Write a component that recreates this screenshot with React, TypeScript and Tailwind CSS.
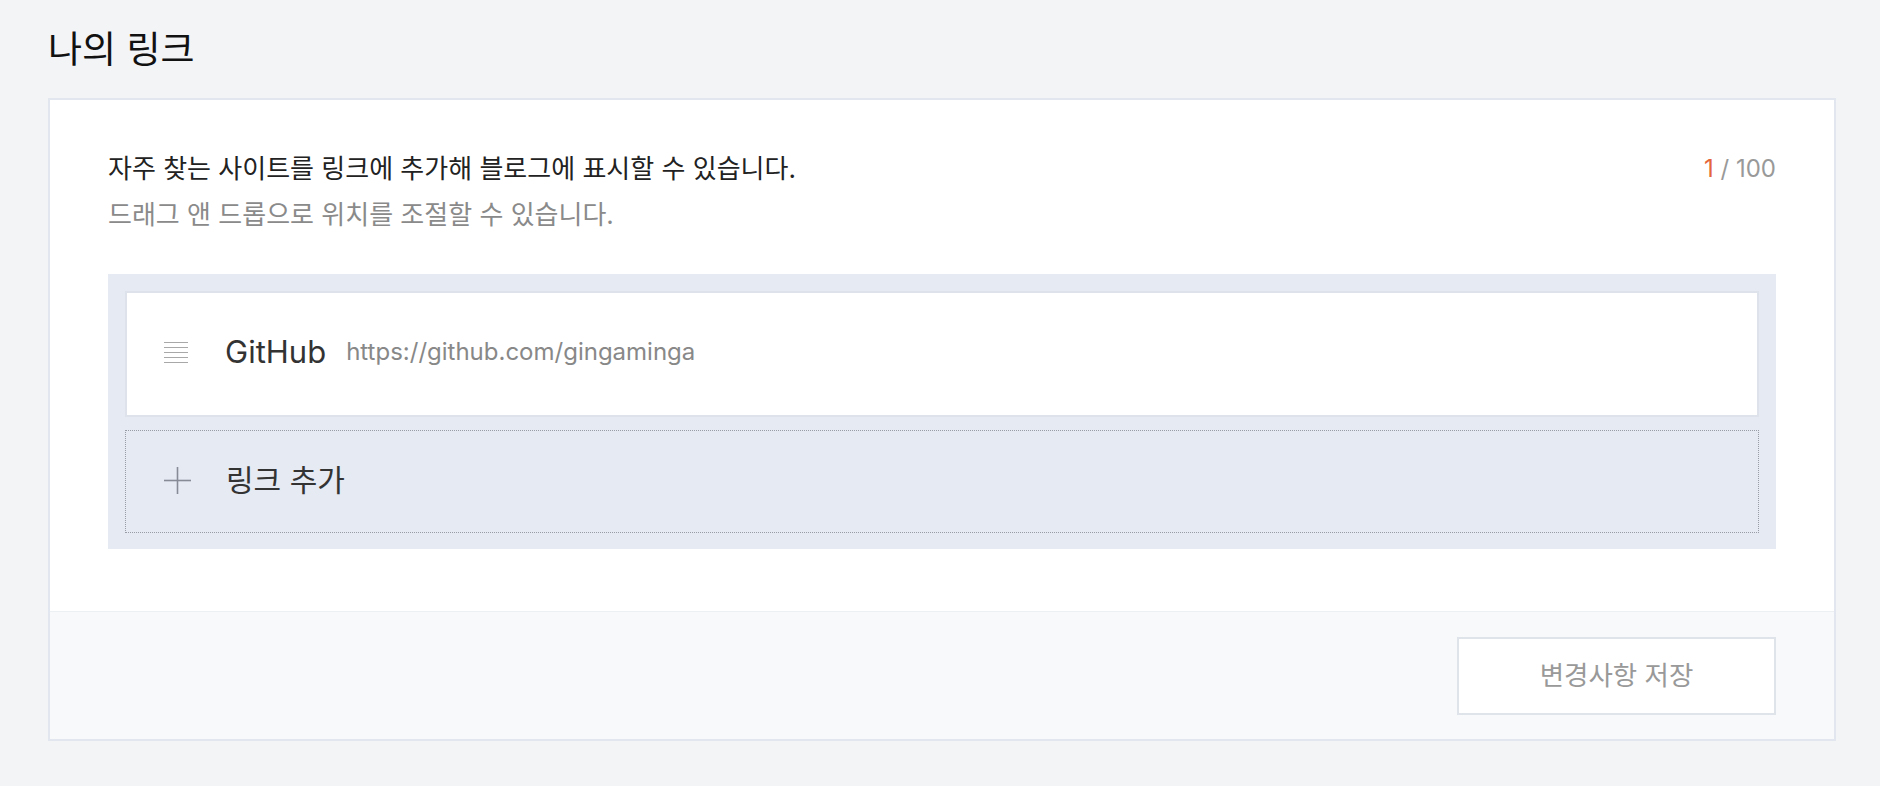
export default function App() {
  return (
    <div className="min-h-[786px] w-full bg-[#f3f4f6] pt-[26px] font-['Inter','Noto_Sans_CJK_KR',sans-serif]">
      <div className="pl-[48px]">
        <h1 className="text-[37px] leading-[48px] text-[#111]">나의 링크</h1>
      </div>
      <div className="ml-[48px] mt-[24px] w-[1788px] border-2 border-[#e2e6ee] bg-white">
        <div className="px-[58px] pt-[46px] pb-[62px]">
          <div className="flex justify-between">
            <div className="text-[26px] leading-[46px]">
              <p className="text-[#222]">자주 찾는 사이트를 링크에 추가해 블로그에 표시할 수 있습니다.</p>
              <p className="text-[#8a8a8a]">드래그 앤 드롭으로 위치를 조절할 수 있습니다.</p>
            </div>
            <div className="text-[24px] leading-[46px]">
              <span className="text-[#e5663b]">1</span>
              <span className="text-[#999]"> / 100</span>
            </div>
          </div>
          <div className="mt-[36px] bg-[#e6eaf2] px-[17px] pt-[17px] pb-[16px]">
            <div className="flex h-[126px] items-center border-2 border-[#dde2eb] bg-white pb-[4px] pl-[37px]">
              <svg width="24" height="21" viewBox="0 0 24 21" className="shrink-0">
                <g stroke="#a8a8a8" strokeWidth="1">
                  <line x1="0" y1="0.5" x2="24" y2="0.5" />
                  <line x1="0" y1="5.5" x2="24" y2="5.5" />
                  <line x1="0" y1="10.5" x2="24" y2="10.5" />
                  <line x1="0" y1="15.5" x2="24" y2="15.5" />
                  <line x1="0" y1="20.5" x2="24" y2="20.5" />
                </g>
              </svg>
              <span className="ml-[37px] text-[31px] leading-[40px] text-[#333]">GitHub</span>
              <span className="ml-[20px] text-[24px] leading-[40px] text-[#888]">https://github.com/gingaminga</span>
            </div>
            <div className="mt-[13px] flex h-[103px] items-center border border-dotted border-[#979ca5] pb-[3px] pl-[38px]">
              <svg width="27" height="27" viewBox="0 0 27 27" className="shrink-0">
                <g stroke="#868b96" strokeWidth="1.6">
                  <line x1="0" y1="13.5" x2="27" y2="13.5" />
                  <line x1="13.5" y1="0" x2="13.5" y2="27" />
                </g>
              </svg>
              <span className="ml-[35px] text-[30px] leading-[40px] text-[#333]">링크 추가</span>
            </div>
          </div>
        </div>
        <div className="flex justify-end border-t border-[#edf0f3] bg-[#f8f9fb] px-[58px] pt-[25px] pb-[24px]">
          <button className="h-[78px] w-[319px] border-2 border-[#dfe3ea] bg-white text-[26.5px] text-[#999]">
            변경사항 저장
          </button>
        </div>
      </div>
    </div>
  );
}
